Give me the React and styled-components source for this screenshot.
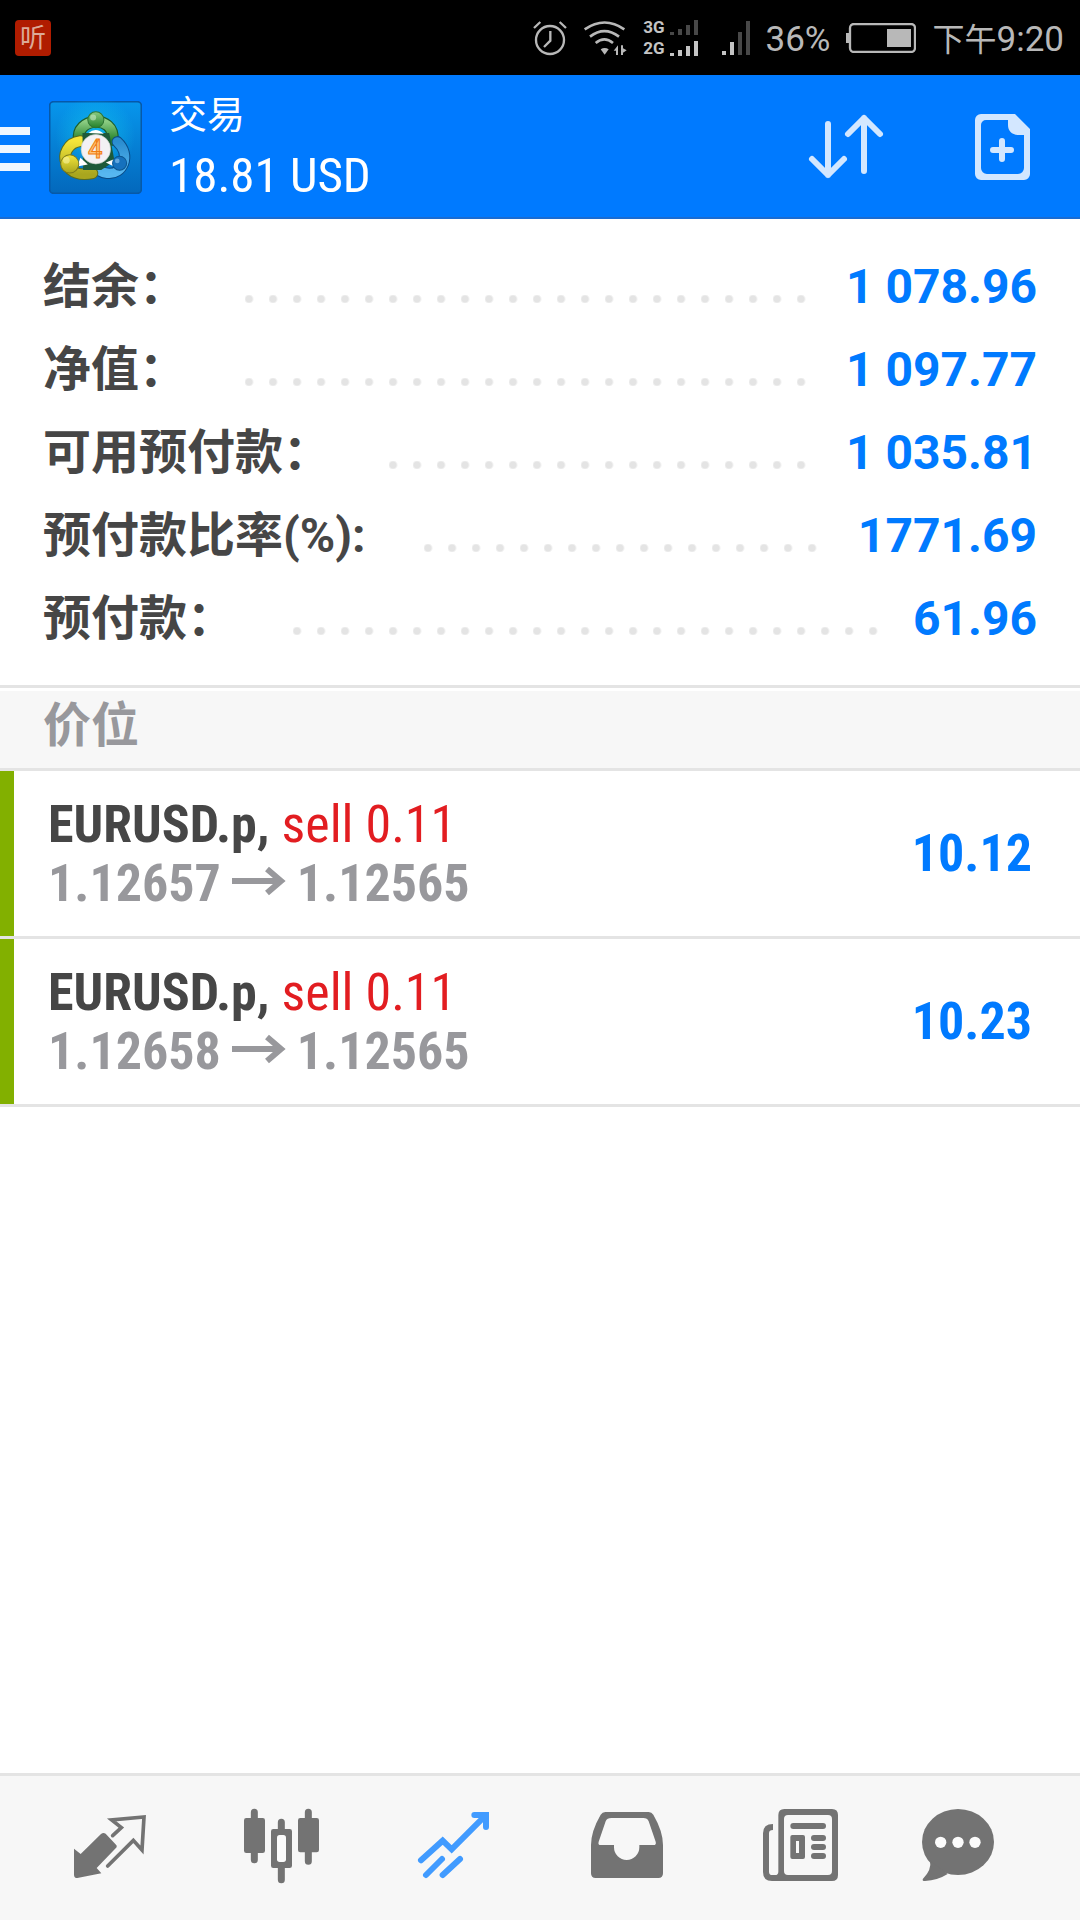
import { useState } from "react"
import styled, { createGlobalStyle } from "styled-components"

const GlobalStyle = createGlobalStyle`
  * {
    box-sizing: border-box;
  }

  body {
    margin: 0;
    background: #fff;
    font-family: Roboto, "Noto Sans CJK SC", sans-serif;
  }

  button {
    padding: 0;
    border: none;
    background: none;
    color: inherit;
    font: inherit;
    cursor: pointer;
  }

  svg {
    display: block;
    flex-shrink: 0;
  }
`

const condensed = `"Roboto Condensed", "Liberation Sans Narrow", Roboto, "Noto Sans CJK SC", sans-serif`

const Page = styled.div`
  display: flex;
  flex-direction: column;
  min-height: 100vh;
`

const StatusBar = styled.div`
  display: flex;
  align-items: center;
  gap: 16px;
  height: 75px;
  padding: 0 16px 0 15px;
  background: #000;
  color: #b8b8b8;
`

const AppBadge = styled.span`
  display: flex;
  align-items: center;
  justify-content: center;
  width: 36px;
  height: 36px;
  margin-right: auto;
  border-radius: 4px;
  background: #b01c00;
  color: #dcaa98;
  font-size: 26px;
  line-height: 36px;
`

const SimStack = styled.div`
  display: grid;
  grid-template-columns: auto auto;
  align-items: center;
  column-gap: 5px;
  row-gap: 5px;
  margin-right: 8px;
  color: #c4c4c4;
  font-size: 17px;
  font-weight: 700;
  line-height: 16px;
`

const StatusText = styled.span`
  padding-top: 4px;
  font-size: 35px;
  line-height: 40px;
`

const ClockPeriod = styled.span`
  font-size: 32px;
`

const Header = styled.header`
  display: flex;
  align-items: center;
  height: 144px;
  background: #007aff;
  box-shadow: inset 0 -2px #1a6cd2;
  color: #fff;
`

const MenuButton = styled.button`
  display: flex;
  flex-direction: column;
  gap: 10px;
  width: 30px;
  margin-right: 19px;
  padding-top: 4px;
`

const MenuBar = styled.span`
  width: 100%;
  height: 8px;
  background: #eef6ff;
`

const Titles = styled.div`
  flex: 1;
  margin-left: 27px;
  padding-top: 2px;
`

const Title = styled.h1`
  margin: 0;
  font-size: 38px;
  font-weight: 400;
  line-height: 56px;
`

const Profit = styled.div`
  font-family: ${condensed};
  font-size: 49px;
  line-height: 66px;
`

const Actions = styled.div`
  display: flex;
  align-items: center;
  gap: 89px;
  padding-right: 50px;
  color: #d3e7ff;
`

const Summary = styled.dl`
  margin: 0;
  padding: 26px 43px 25px;
  border-bottom: 3px solid #e4e4e4;
  font-size: 48px;
  font-weight: 700;
  line-height: 83px;
`

const SummaryRow = styled.div`
  display: flex;
  align-items: center;
`

const Label = styled.dt`
  color: #464646;
`

const Leader = styled.span`
  flex: 1;
  height: 8px;
  margin: 24px 32px 0 58px;
  background: radial-gradient(circle at 4px 4px, #e4e4e4 3px, transparent 5px) repeat-x;
  background-size: 24px 8px;
`

const Value = styled.dd`
  margin: 0;
  color: #007aff;
`

const SectionTitle = styled.h2`
  margin: 3px 0 0;
  padding: 0 43px 8px;
  border-bottom: 3px solid #e4e4e4;
  background: #f7f7f7;
  color: #98989c;
  font-size: 48px;
  font-weight: 700;
  line-height: 69px;
`

const Positions = styled.ul`
  flex: 1;
  margin: 0;
  padding: 0;
  list-style: none;
  font-family: ${condensed};
  font-size: 52px;
  font-weight: 700;
  line-height: 59px;
`

const Position = styled.li`
  display: flex;
  border-bottom: 3px solid #e4e4e4;
`

const Marker = styled.span`
  width: 14px;
  background: #82b000;
`

const PositionBody = styled.div`
  flex: 1;
  display: flex;
  align-items: center;
  justify-content: space-between;
  height: 165px;
  padding: 0 48px 0 34px;
`

const Symbol = styled.div`
  color: #464646;
`

const Side = styled.span`
  color: #e21d21;
  font-weight: 400;
`

const Prices = styled.div`
  display: flex;
  align-items: center;
  gap: 11px;
  color: #98989c;
`

const PositionProfit = styled.div`
  color: #007aff;
`

const TabBar = styled.nav`
  display: flex;
  justify-content: space-between;
  align-items: center;
  height: 147px;
  padding: 0 67px 0 62px;
  border-top: 3px solid #e4e4e4;
  background: #f7f7f7;
`

const Tab = styled.button`
  width: 96px;
  height: 96px;
  color: ${(props) => (props.$active ? "#419bff" : "#737373")};
`

const account = [
  { label: "结余：", value: "1 078.96" },
  { label: "净值：", value: "1 097.77" },
  { label: "可用预付款：", value: "1 035.81" },
  { label: "预付款比率(%):", value: "1771.69" },
  { label: "预付款：", value: "61.96" },
]

const positions = [
  { id: 1, symbol: "EURUSD.p", side: "sell 0.11", open: "1.12657", current: "1.12565", profit: "10.12" },
  { id: 2, symbol: "EURUSD.p", side: "sell 0.11", open: "1.12658", current: "1.12565", profit: "10.23" },
]

const AlarmIcon = () => (
  <svg width="34" height="36" viewBox="33 42 102 108" fill="none" stroke="currentColor" strokeWidth="7">
    <circle cx="84" cy="102" r="42" />
    <path d="M85 75v29l-19 19M36 66l19-18M113 48l19 18" />
  </svg>
)

const WifiIcon = () => (
  <svg width="44" height="36" viewBox="186 42 132 108" fill="none" stroke="currentColor" strokeWidth="8">
    <path d="M191 70q60-41 119 0M207 92q43-33 87 0M224 111q26-22 52 0" />
    <path d="M239 130q12-8 24 0l-12 16z" fill="currentColor" stroke="none" />
    <path d="M278 134l13-16v29h-6v-13zM300 118h6v9l11 6-11 7v7h-6z" fill="currentColor" stroke="none" />
  </svg>
)

const SignalBars = ({ heights, height, lit }) => (
  <svg width="28" height={height} viewBox={`0 0 28 ${height}`}>
    {heights.map((h, i) => (
      <rect key={i} x={i * 8} y={height - h} width="4" height={h} fill={i < lit ? "#c4c4c4" : "#484848"} />
    ))}
  </svg>
)

const BatteryIcon = () => (
  <svg width="70" height="30" viewBox="978 51 210 90">
    <rect x="990" y="54" width="195" height="84" rx="12" fill="none" stroke="currentColor" strokeWidth="7" />
    <path d="M978 81h12v30h-12zM1101 69h72v54h-72z" fill="currentColor" />
  </svg>
)

const Logo = () => (
  <svg width="93" height="93" viewBox="28 28 278 278" fill="none">
    <defs>
      <linearGradient id="tile" x1="0" y1="0" x2="0" y2="1">
        <stop offset="0" stopColor="#0796ec" />
        <stop offset="1" stopColor="#0368bc" />
      </linearGradient>
      <radialGradient id="glow">
        <stop offset="0" stopColor="#10c9ef" />
        <stop offset="1" stopColor="#10c9ef" stopOpacity="0" />
      </radialGradient>
      <linearGradient id="green" x1="0" y1="0" x2="0" y2="1">
        <stop offset="0" stopColor="#8bcc82" />
        <stop offset="1" stopColor="#24812b" />
      </linearGradient>
      <linearGradient id="yellow" x1="0" y1="0" x2="0" y2="1">
        <stop offset="0" stopColor="#f4e53a" />
        <stop offset="1" stopColor="#a9a61e" />
      </linearGradient>
      <linearGradient id="blue" x1="0" y1="0" x2="0" y2="1">
        <stop offset="0" stopColor="#2b8dd0" />
        <stop offset="1" stopColor="#57b7f0" />
      </linearGradient>
    </defs>
    <rect x="30" y="30" width="274" height="274" rx="12" fill="url(#tile)" stroke="#0759a8" strokeWidth="5" />
    <circle cx="166" cy="132" r="120" fill="url(#glow)" opacity="0.7" />
    <path d="M118 146c-14-68 108-80 100-2" stroke="#1c5e2c" strokeWidth="36" strokeLinecap="round" />
    <path d="M118 146c-14-68 108-80 100-2" stroke="url(#green)" strokeWidth="29" strokeLinecap="round" />
    <path d="M232 150c44 40 16 100-30 94-24-3-38-14-48-28" stroke="#0a4b86" strokeWidth="34" strokeLinecap="round" />
    <path d="M232 150c44 40 16 100-30 94-24-3-38-14-48-28" stroke="url(#blue)" strokeWidth="28" strokeLinecap="round" />
    <path d="M122 148c-38 4-54 42-42 66 12 30 44 38 78 30" stroke="#5c6b1c" strokeWidth="35" strokeLinecap="round" />
    <path d="M122 148c-38 4-54 42-42 66 12 30 44 38 78 30" stroke="url(#yellow)" strokeWidth="29" strokeLinecap="round" />
    <path d="M128 124h80l16 84-40 26h-54z" fill="#1d5a3a" />
    <path d="M146 124q22-20 46 2zM112 224l10-26 22 20zM198 212l24-10v22z" fill="#fff" />
    <circle cx="168" cy="84" r="24" fill="url(#green)" stroke="#2e7534" strokeWidth="3" />
    <circle cx="90" cy="216" r="27" fill="url(#yellow)" stroke="#7d7b1b" strokeWidth="3" />
    <circle cx="239" cy="214" r="21" fill="#1671bd" stroke="#0b558f" strokeWidth="3" />
    <circle cx="160" cy="77" r="9" fill="#d1efcd" opacity="0.55" />
    <circle cx="80" cy="205" r="10" fill="#fbf8ae" opacity="0.55" />
    <circle cx="232" cy="207" r="7" fill="#a9dcff" opacity="0.5" />
    <circle cx="168" cy="172" r="44" fill="#f3f1f4" stroke="#c6d0c8" strokeWidth="2" />
    <text x="166" y="199" textAnchor="middle" fontFamily="Roboto" fontSize="76" fontWeight="500" fill="#ffc37a" stroke="#f07d12" strokeWidth="3">
      4
    </text>
  </svg>
)

const SortIcon = () => (
  <svg width="80" height="70" viewBox="0 0 80 70" fill="none" stroke="currentColor" strokeWidth="6" strokeLinecap="round" strokeLinejoin="round">
    <path d="M22 12v51M6 47l16 16 16-16M58 59V6M42 22L58 6l16 16" />
  </svg>
)

const NewOrderIcon = () => (
  <svg width="55" height="66" viewBox="0 0 55 66" fill="currentColor">
    <path
      fillRule="evenodd"
      d="M6 0h34l15 15v45a6 6 0 0 1-6 6H6a6 6 0 0 1-6-6V6a6 6 0 0 1 6-6zM11 6a5 5 0 0 0-5 5v43a6 6 0 0 0 6 6h31a6 6 0 0 0 6-6V21h-5c-7 0-11-4-11-10V6z"
    />
    <path d="M27 27v18M18 36h18" stroke="currentColor" strokeWidth="6" strokeLinecap="round" />
  </svg>
)

const PriceArrow = () => (
  <svg width="54" height="34" viewBox="0 0 54 34" fill="none" stroke="currentColor" strokeWidth="6">
    <path d="M0 15h50M35 3l14 12-14 12" />
  </svg>
)

const QuotesIcon = () => (
  <svg viewBox="6 30 288 288">
    <path
      d="M42 176l20 16 61-60q7-6 14-1l31 33q5 5-1 11l-57 59 14 16-72 14q-10 0-10-10z"
      fill="currentColor"
    />
    <path d="M158 137l26-24-29-23 97-9-6 99-26-29-77 77" fill="none" stroke="currentColor" strokeWidth="11" strokeLinecap="round" />
  </svg>
)

const ChartIcon = () => (
  <svg viewBox="519 30 288 288" fill="currentColor">
    <path d="M583 67v142M745 67v147M664 97v20M664 234v35" stroke="currentColor" strokeWidth="21" strokeLinecap="round" />
    <rect x="552" y="84" width="63" height="105" rx="7" />
    <rect x="714" y="84" width="63" height="103" rx="7" />
    <rect x="633" y="117" width="63" height="117" rx="7" />
    <rect x="651" y="135" width="27" height="81" rx="8" fill="#fbfbfb" />
  </svg>
)

const TradeIcon = () => (
  <svg viewBox="1032 30 288 288" fill="none" stroke="currentColor" strokeWidth="18" strokeLinecap="round">
    <path d="M1083 211l65-59 27 26 101-101M1243 75h35v36M1098 255l48-48M1148 255l52-48" />
  </svg>
)

const HistoryIcon = () => (
  <svg viewBox="15 30 288 288" fill="currentColor">
    <path
      fillRule="evenodd"
      d="M106 66h130q9 0 14 8 29 50 29 91v85q0 14-14 14H77q-14 0-14-14v-85q0-41 29-91 5-8 14-8zM124 84q-13 0-17 10l-21 61q-3 10 6 10h40v7a38 38 0 0 0 76 0v-7h42q10 0 7-10l-21-61q-4-10-16-10z"
    />
  </svg>
)

const NewsIcon = () => (
  <svg viewBox="528 30 288 288" fill="currentColor">
    <path
      fillRule="evenodd"
      d="M643 57h143q18 0 18 18v180q0 18-18 18H606q-27 0-27-27V130q0-28 30-28v18q-12 0-12 10v115q0 10 10 10h8q10 0 10-10V75q0-18 18-18zM654 75q-12 0-12 12v156q0 12 12 12h120q12 0 12-12V87q0-12-12-12z"
    />
    <rect x="661" y="99" width="107" height="18" rx="9" />
    <path fillRule="evenodd" d="M667 135h32q6 0 6 6v60q0 6-6 6h-32q-6 0-6-6v-60q0-6 6-6zM678 153v36h9v-36z" />
    <rect x="723" y="135" width="45" height="18" rx="9" />
    <rect x="723" y="162" width="45" height="18" rx="9" />
    <rect x="723" y="189" width="45" height="18" rx="9" />
  </svg>
)

const ChatIcon = () => (
  <svg viewBox="1041 30 288 288" fill="currentColor">
    <ellipse cx="1164" cy="156" rx="108" ry="99" />
    <path d="M1080 212q6 26-21 54-4 7 6 7 38-2 68-21z" />
    <g fill="#fbfbfb">
      <circle cx="1112" cy="157" r="17" />
      <circle cx="1164" cy="157" r="17" />
      <circle cx="1215" cy="157" r="17" />
    </g>
  </svg>
)

const tabs = [
  { id: "quotes", label: "行情", Icon: QuotesIcon },
  { id: "chart", label: "图表", Icon: ChartIcon },
  { id: "trade", label: "交易", Icon: TradeIcon },
  { id: "history", label: "历史", Icon: HistoryIcon },
  { id: "news", label: "新闻", Icon: NewsIcon },
  { id: "chat", label: "聊天", Icon: ChatIcon },
]

const App = () => {
  const [activeTab, setActiveTab] = useState("trade")

  return (
    <Page lang="zh-CN">
      <GlobalStyle />

      <StatusBar>
        <AppBadge>听</AppBadge>
        <AlarmIcon />
        <WifiIcon />
        <SimStack>
          <span>3G</span>
          <SignalBars heights={[3, 6, 10, 15]} height={15} lit={0} />
          <span>2G</span>
          <SignalBars heights={[3, 6, 10, 15]} height={15} lit={4} />
        </SimStack>
        <SignalBars heights={[4, 13, 23, 34]} height={34} lit={2} />
        <StatusText>36%</StatusText>
        <BatteryIcon />
        <StatusText>
          <ClockPeriod>下午</ClockPeriod>9:20
        </StatusText>
      </StatusBar>

      <Header>
        <MenuButton aria-label="菜单">
          <MenuBar />
          <MenuBar />
          <MenuBar />
        </MenuButton>
        <Logo />
        <Titles>
          <Title>交易</Title>
          <Profit>18.81 USD</Profit>
        </Titles>
        <Actions>
          <button aria-label="排序">
            <SortIcon />
          </button>
          <button aria-label="新订单">
            <NewOrderIcon />
          </button>
        </Actions>
      </Header>

      <Summary>
        {account.map(({ label, value }) => (
          <SummaryRow key={label}>
            <Label>{label}</Label>
            <Leader />
            <Value>{value}</Value>
          </SummaryRow>
        ))}
      </Summary>

      <SectionTitle>价位</SectionTitle>
      <Positions>
        {positions.map((position) => (
          <Position key={position.id}>
            <Marker />
            <PositionBody>
              <div>
                <Symbol>
                  {position.symbol}, <Side>{position.side}</Side>
                </Symbol>
                <Prices>
                  <span>{position.open}</span>
                  <PriceArrow />
                  <span>{position.current}</span>
                </Prices>
              </div>
              <PositionProfit>{position.profit}</PositionProfit>
            </PositionBody>
          </Position>
        ))}
      </Positions>

      <TabBar>
        {tabs.map(({ id, label, Icon }) => (
          <Tab key={id} $active={id === activeTab} aria-label={label} onClick={() => setActiveTab(id)}>
            <Icon />
          </Tab>
        ))}
      </TabBar>
    </Page>
  )
}

export default App
